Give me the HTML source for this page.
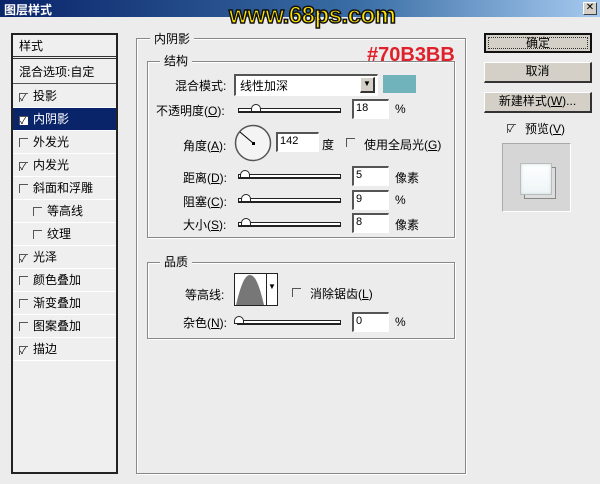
<!DOCTYPE html>
<html><head><meta charset="utf-8"><style>
*{margin:0;padding:0;box-sizing:border-box}
body{width:600px;height:484px;background:#ececec;position:relative;overflow:hidden;font-family:"Liberation Sans","Noto Sans CJK SC",sans-serif;font-size:12px;color:#000}
.a{position:absolute;white-space:nowrap}
.title{left:0;top:0;width:600px;height:17px;background:linear-gradient(90deg,#0a246a,#3a6ea5 60%,#a6caf0);color:#fff;font-weight:bold;font-size:12px;padding:1px 4px}
.close{right:3px;top:2px;width:14px;height:13px;background:#d4d0c8;border:1px solid #fff;border-right-color:#404040;border-bottom-color:#404040;font-size:10px;line-height:10px;text-align:center;color:#000}
.list{left:11px;top:33px;width:107px;height:441px;background:#efefef;border:2px solid #222}
.row{position:absolute;left:0;width:103px;height:23px;border-bottom:1px solid #fff;padding-left:6px;line-height:22px;font-size:12px}
.cb{display:inline-block;width:9px;height:9px;border-left:1px solid #555;border-top:1px solid #555;margin-right:5px;vertical-align:-1px;font-size:9px;line-height:8px}
.grp{border:1px solid #888;box-shadow:1px 1px 0 #fff, inset 1px 1px 0 #fff}
.lg{background:#ececec;padding:0 4px;font-size:12px}
.inp{background:#fff;border:1px solid #fff;border-top:2px solid #555;border-left:2px solid #555;height:20px;font-size:11px;padding:1px 2px}
.sl{height:5px;border:1px solid #222;border-bottom-width:2px;background:#fff}
.th{width:10px;height:8px;background:#fff;border:1px solid #222;border-radius:5px 5px 0 0}
.btn{background:#d4d0c8;border:1px solid #fff;border-right:2px solid #333;border-bottom:2px solid #333;text-align:center;line-height:17px;font-size:12px}
</style></head><body>
<div class="a title">图层样式</div>
<div class="a close">✕</div>
<div class="a" style="left:229px;top:2px;font-size:24px;font-weight:bold;color:#ffe400;-webkit-text-stroke:1.5px #111;letter-spacing:-0.5px">www.68ps.com</div>

<div class="a list">
 <div class="row" style="top:0;height:24px;border-bottom:3px double #333">样式</div>
 <div class="row" style="top:26px;border-bottom:1px solid #555">混合选项:自定</div>
 <div class="row" style="top:50px"><span class="cb">✓</span>投影</div>
 <div class="row" style="top:73px;background:#0a246a;color:#fff"><span class="cb" style="background:#fff;color:#000">✓</span>内阴影</div>
 <div class="row" style="top:96px"><span class="cb"></span>外发光</div>
 <div class="row" style="top:119px"><span class="cb">✓</span>内发光</div>
 <div class="row" style="top:142px"><span class="cb"></span>斜面和浮雕</div>
 <div class="row" style="top:165px;padding-left:20px"><span class="cb"></span>等高线</div>
 <div class="row" style="top:188px;padding-left:20px"><span class="cb"></span>纹理</div>
 <div class="row" style="top:211px"><span class="cb">✓</span>光泽</div>
 <div class="row" style="top:234px"><span class="cb"></span>颜色叠加</div>
 <div class="row" style="top:257px"><span class="cb"></span>渐变叠加</div>
 <div class="row" style="top:280px"><span class="cb"></span>图案叠加</div>
 <div class="row" style="top:303px"><span class="cb">✓</span>描边</div>
</div>

<div class="a grp" style="left:136px;top:38px;width:330px;height:436px"></div>
<div class="a lg" style="left:150px;top:30px">内阴影</div>
<div class="a grp" style="left:147px;top:61px;width:308px;height:177px"></div>
<div class="a lg" style="left:160px;top:52px">结构</div>
<div class="a" style="left:367px;top:44px;font-size:20px;font-weight:bold;color:#e0202a">#70B3BB</div>

<div class="a" style="left:175px;top:77px">混合模式:</div>
<div class="a inp" style="left:234px;top:74px;width:144px;height:22px;font-size:12px;padding-left:4px">线性加深</div>
<div class="a btn" style="left:360px;top:77px;width:15px;height:16px;line-height:12px;font-size:8px">▼</div>
<div class="a" style="left:383px;top:75px;width:33px;height:18px;background:#70b3bb"></div>

<div class="a" style="left:156px;top:102px">不透明度(<u>O</u>):</div>
<div class="a sl" style="left:238px;top:108px;width:103px"></div>
<div class="a th" style="left:251px;top:104px"></div>
<div class="a inp" style="left:352px;top:99px;width:37px">18</div>
<div class="a" style="left:395px;top:102px">%</div>

<div class="a" style="left:183px;top:137px">角度(<u>A</u>):</div>
<svg class="a" style="left:233px;top:123px" width="40" height="40"><circle cx="20" cy="20" r="17.5" fill="#f4f4f4" stroke="#555" stroke-width="1.5"/><line x1="20" y1="20" x2="7" y2="9" stroke="#000"/><rect x="19" y="19" width="3" height="3"/></svg>
<div class="a inp" style="left:276px;top:132px;width:43px">142</div>
<div class="a" style="left:322px;top:136px">度</div>
<div class="a cb" style="left:346px;top:138px;border-color:#555"></div>
<div class="a" style="left:364px;top:136px">使用全局光(<u>G</u>)</div>

<div class="a" style="left:183px;top:169px">距离(<u>D</u>):</div>
<div class="a sl" style="left:238px;top:174px;width:103px"></div>
<div class="a th" style="left:240px;top:170px"></div>
<div class="a inp" style="left:352px;top:166px;width:37px">5</div>
<div class="a" style="left:395px;top:169px">像素</div>

<div class="a" style="left:183px;top:193px">阻塞(<u>C</u>):</div>
<div class="a sl" style="left:238px;top:198px;width:103px"></div>
<div class="a th" style="left:241px;top:194px"></div>
<div class="a inp" style="left:352px;top:190px;width:37px">9</div>
<div class="a" style="left:395px;top:193px">%</div>

<div class="a" style="left:183px;top:216px">大小(<u>S</u>):</div>
<div class="a sl" style="left:238px;top:222px;width:103px"></div>
<div class="a th" style="left:241px;top:218px"></div>
<div class="a inp" style="left:352px;top:213px;width:37px">8</div>
<div class="a" style="left:395px;top:216px">像素</div>

<div class="a grp" style="left:147px;top:262px;width:308px;height:77px"></div>
<div class="a lg" style="left:160px;top:253px">品质</div>
<div class="a" style="left:185px;top:286px">等高线:</div>
<div class="a" style="left:234px;top:273px;width:44px;height:33px;background:#fff;border:1px solid #222"></div>
<svg class="a" style="left:235px;top:274px" width="32" height="31"><path d="M1 31 C6 10 10 1 15 1 C20 1 24 10 29 31 Z" fill="#777"/></svg>
<div class="a" style="left:266px;top:274px;width:1px;height:31px;background:#222"></div>
<div class="a" style="left:268px;top:282px;font-size:8px">▼</div>
<div class="a cb" style="left:292px;top:288px"></div>
<div class="a" style="left:310px;top:285px">消除锯齿(<u>L</u>)</div>

<div class="a" style="left:183px;top:314px">杂色(<u>N</u>):</div>
<div class="a sl" style="left:237px;top:320px;width:104px"></div>
<div class="a th" style="left:234px;top:316px"></div>
<div class="a inp" style="left:352px;top:312px;width:37px">0</div>
<div class="a" style="left:395px;top:315px">%</div>

<div class="a btn" style="left:484px;top:33px;width:108px;height:20px;border:2px solid #111;outline:1px dotted #333;outline-offset:-5px">确定</div>
<div class="a btn" style="left:484px;top:62px;width:108px;height:21px">取消</div>
<div class="a btn" style="left:484px;top:92px;width:108px;height:21px">新建样式(<u>W</u>)...</div>
<div class="a cb" style="left:507px;top:124px;font-size:9px">✓</div>
<div class="a" style="left:525px;top:120px">预览(<u>V</u>)</div>
<div class="a" style="left:502px;top:143px;width:69px;height:69px;background:#d6d6d6;border:1px solid #fff;border-top-color:#aaa;border-left-color:#aaa"></div>
<div class="a" style="left:524px;top:167px;width:32px;height:32px;background:#ddd;border:1px solid #888"></div>
<div class="a" style="left:520px;top:163px;width:32px;height:32px;background:linear-gradient(#fff,#eef4f6);border:1px solid #bbb;box-shadow:inset 0 0 3px #c8dde0"></div>
</body></html>
